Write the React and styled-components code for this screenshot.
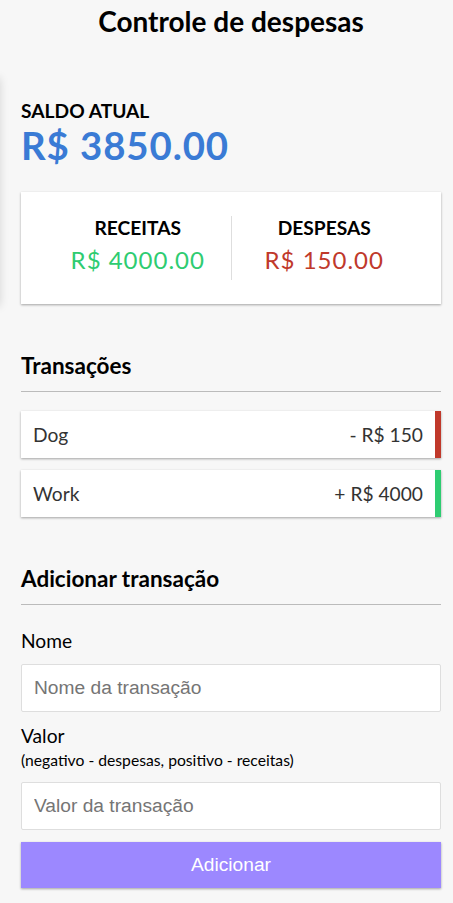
import React from 'react'
import styled, { createGlobalStyle } from 'styled-components'

const GlobalStyle = createGlobalStyle`
    * {
        box-sizing: border-box;
    }
    body {
        margin: 0;
        background-color: #f7f7f7;
        font-family: 'Lato', 'Liberation Sans', sans-serif;
        font-size: 19.2px;
    }
`

const shadow = '0 1px 3px rgba(0,0,0,0.12), 0 1px 2px rgba(0,0,0,0.24)'

const Page = styled.div`
    position: relative;
    width: 420px;
    margin-left: 21px;
    padding-top: 4px;
`
const EdgeShade = styled.div`
    position: absolute;
    left: -33px;
    top: 78px;
    width: 12px;
    height: 228px;
    box-shadow: 0 0 10px rgba(0,0,0,0.14);
`
const Title = styled.h1`
    margin: 0;
    text-align: center;
    font-size: 28px;
    color: #000;
`
const Container = styled.div`
    margin-top: 61px;
`
const Label4 = styled.h4`
    margin: 0;
    font-size: 19.2px;
    text-transform: uppercase;
    color: #000;
`
const Balance = styled.h1`
    margin: 0;
    font-size: 38.4px;
    letter-spacing: 0.9px;
    color: #3a7bd5;
`
const IncExp = styled.div`
    background-color: #fff;
    box-shadow: ${shadow};
    padding: 24px;
    display: flex;
    justify-content: space-between;
    margin: 24px 0;
`
const IncExpCol = styled.div`
    flex: 1;
    text-align: center;
    border-right: ${({$divider}) => $divider ? '1px solid #dedede' : 'none'};
`
const Money = styled.p`
    font-size: 24px;
    letter-spacing: 1px;
    margin: 6px 0;
    color: ${({$plus}) => $plus ? '#2ecc71' : '#c0392b'};
`
const SectionTitle = styled.h3`
    margin: 48px 0 12px;
    padding-bottom: 12px;
    border-bottom: 1px solid #bbb;
    font-size: 22.5px;
    color: #000;
`
const List = styled.ul`
    list-style-type: none;
    padding: 0;
    margin: 19.2px 0 48px;
`
const Item = styled.li`
    background-color: #fff;
    box-shadow: ${shadow};
    color: #333;
    display: flex;
    justify-content: space-between;
    padding: 12px;
    margin: 12px 0;
    border-right: 6px solid ${({$plus}) => $plus ? '#2ecc71' : '#c0392b'};
`
const FormControl = styled.div``
const Label = styled.label`
    display: inline-block;
    margin: 12px 0;
    color: #000;
`
const Small = styled.small`
    font-size: 15.7px;
`
const Input = styled.input`
    display: block;
    width: 100%;
    border: 1px solid #dedede;
    border-radius: 2px;
    font-family: 'Liberation Sans', Arial, sans-serif;
    font-size: 19.2px;
    padding: 12px;
    &::placeholder {
        color: #757575;
    }
`
const Button = styled.button`
    display: block;
    width: 100%;
    background-color: #9c88ff;
    box-shadow: ${shadow};
    color: #fff;
    border: 0;
    font-family: 'Liberation Sans', Arial, sans-serif;
    font-size: 19.2px;
    margin: 12px 0 36px;
    padding: 12px;
    cursor: pointer;
`

const transactions = [
    { id: 1, text: 'Dog', amount: -150 },
    { id: 2, text: 'Work', amount: 4000 },
]

const App = () => {
    const total = transactions.reduce((a, t) => a + t.amount, 0)
    const income = transactions.filter(t => t.amount > 0).reduce((a, t) => a + t.amount, 0)
    const expense = transactions.filter(t => t.amount < 0).reduce((a, t) => a - t.amount, 0)

    return (
        <Page>
            <GlobalStyle />
            <EdgeShade />
            <Title>Controle de despesas</Title>
            <Container>
                <Label4>Saldo atual</Label4>
                <Balance>R$ {total.toFixed(2)}</Balance>

                <IncExp>
                    <IncExpCol $divider>
                        <Label4>Receitas</Label4>
                        <Money $plus>R$ {income.toFixed(2)}</Money>
                    </IncExpCol>
                    <IncExpCol>
                        <Label4>Despesas</Label4>
                        <Money>R$ {expense.toFixed(2)}</Money>
                    </IncExpCol>
                </IncExp>

                <SectionTitle>Transações</SectionTitle>
                <List>
                    {transactions.map(t => (
                        <Item key={t.id} $plus={t.amount > 0}>
                            {t.text}
                            <span>{t.amount < 0 ? '-' : '+'} R$ {Math.abs(t.amount)}</span>
                        </Item>
                    ))}
                </List>

                <SectionTitle>Adicionar transação</SectionTitle>
                <form onSubmit={e => e.preventDefault()}>
                    <FormControl>
                        <Label htmlFor="text">Nome</Label>
                        <Input type="text" id="text" placeholder="Nome da transação" />
                    </FormControl>
                    <FormControl>
                        <Label htmlFor="amount">Valor <br /><Small>(negativo - despesas, positivo - receitas)</Small></Label>
                        <Input type="number" id="amount" placeholder="Valor da transação" />
                    </FormControl>
                    <Button>Adicionar</Button>
                </form>
            </Container>
        </Page>
    )
}

export default App
